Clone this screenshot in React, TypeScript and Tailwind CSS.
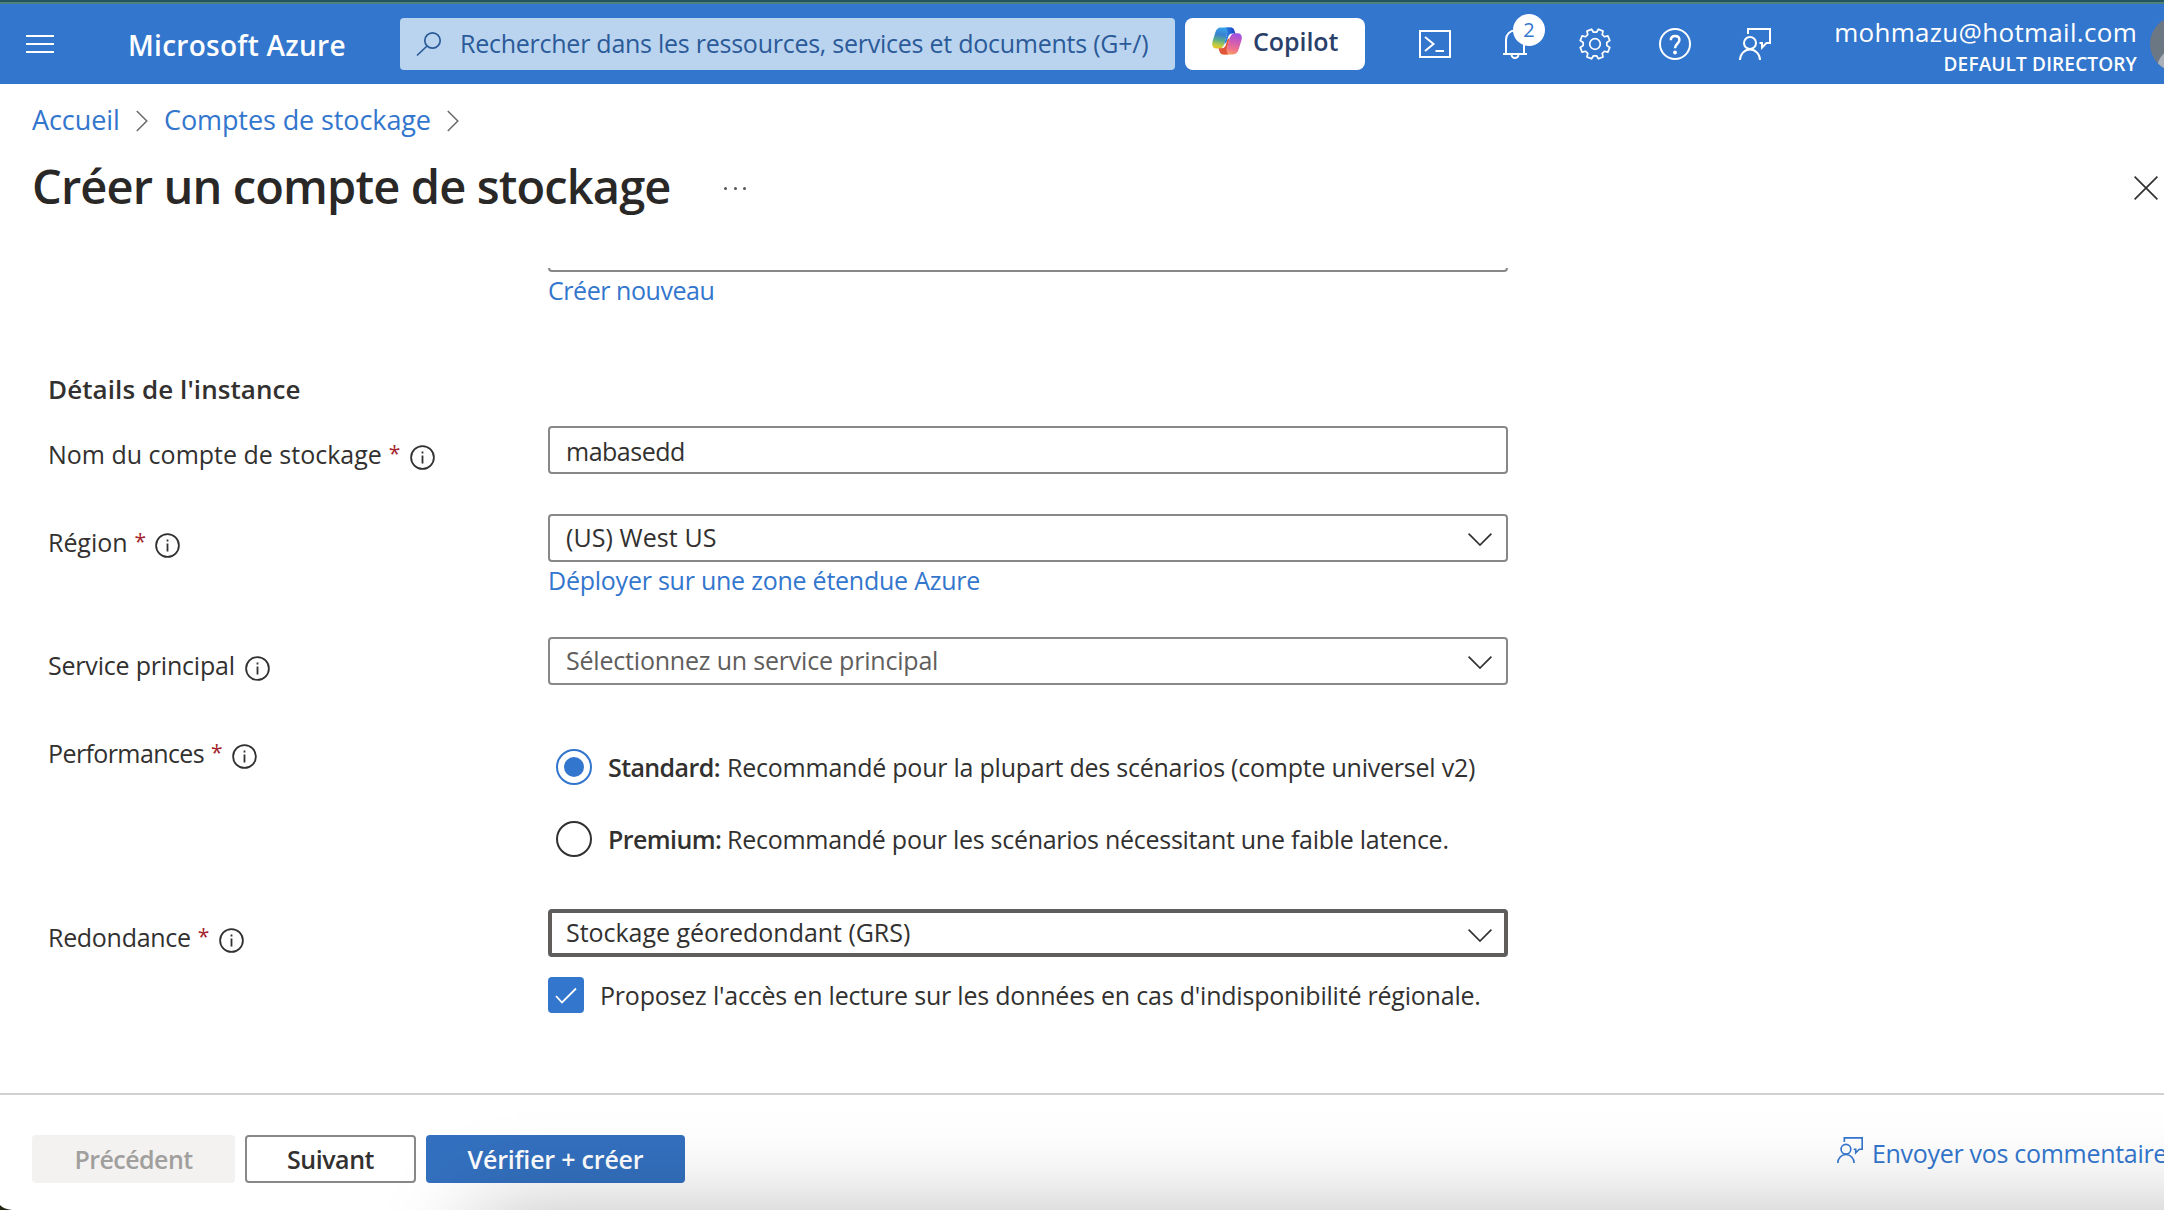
import type { ReactNode } from "react";

/* ---------- icons ---------- */

function SearchIcon() {
  return (
    <svg width="26" height="26" viewBox="0 0 26 26" fill="none" stroke="#2a5a98" strokeWidth="1.7">
      <circle cx="16.5" cy="9.5" r="7.7" />
      <path d="M11 15 1 24.5" />
    </svg>
  );
}

function CopilotLogo() {
  const ribbon =
    "M9 .4H20C17 1 16 3.6 15 7l-3 10.4C11 20.6 9.4 21.6 6.4 21.6H4.6C.6 21.6-.4 18.4.5 14.6L3.4 5.2C4.3 2 6 .4 9 .4Z";
  const fold = "M13.5 .4H18.6C21.6 .4 22.4 2.4 23.4 6.6H20.4C17.8 6.6 16.8 8 16.2 10L14.6 15 12 17.4 15 7C16 3.4 15 1.4 13.5 .4Z";
  return (
    <svg width="30" height="28" viewBox="0 0 30 28">
      <defs>
        <linearGradient id="cool" x1="10" y1="0" x2="6" y2="22" gradientUnits="userSpaceOnUse">
          <stop offset="0" stopColor="#35a6ee" />
          <stop offset=".35" stopColor="#3a80cf" />
          <stop offset=".6" stopColor="#5aae8a" />
          <stop offset=".85" stopColor="#c8cc3c" />
          <stop offset="1" stopColor="#f0c020" />
        </linearGradient>
        <linearGradient id="warm" x1="24" y1="6" x2="19" y2="28" gradientUnits="userSpaceOnUse">
          <stop offset="0" stopColor="#9a4fe6" />
          <stop offset=".4" stopColor="#cf5bb4" />
          <stop offset=".75" stopColor="#f0748a" />
          <stop offset="1" stopColor="#f7a25e" />
        </linearGradient>
        <linearGradient id="foldBlue" x1="14" y1="4" x2="23" y2="3" gradientUnits="userSpaceOnUse">
          <stop offset="0" stopColor="#2a7fe0" />
          <stop offset="1" stopColor="#1a3fc4" />
        </linearGradient>
      </defs>
      <path d={ribbon} fill="url(#cool)" />
      <path d="M21 27.4H10c3-.6 4-3.2 5-6.6l3-10.4c1-3.2 2.6-4.2 5.6-4.2h1.8c4 0 5 3.2 4.1 7L26.6 22.6c-.9 3.2-2.6 4.8-5.600 4.800Z" fill="url(#warm)" />
      <path d={fold} fill="url(#foldBlue)" />
      <path d={fold} fill="#e0563a" transform="rotate(180 15 13.9)" />
    </svg>
  );
}

function TerminalIcon() {
  return (
    <svg width="32" height="28" viewBox="0 0 32 28" fill="none" stroke="#fff" strokeWidth="2">
      <path d="M1 1h30v26H1z" />
      <path d="m6 7 8.500 7L6 21M16.500 21H25" />
    </svg>
  );
}

function BellIcon() {
  return (
    <svg width="24" height="30" viewBox="0 0 24 30" fill="none" stroke="#fff" strokeWidth="2">
      <path d="M3 25V10.500a9 9 0 0 1 18 0V25M0 25h24" />
      <path d="M8.500 25.500a3.500 3.500 0 0 0 7 0" />
    </svg>
  );
}

/* Eight teeth, four points each: two on the valley circle and two on the rim. */
const gearPoints = Array.from({ length: 8 }, (_, i) => {
  const mid = 22.5 + i * 45;
  return [
    [mid - 15, 11.9],
    [mid - 9.5, 15.2],
    [mid + 9.5, 15.2],
    [mid + 15, 11.9],
  ]
    .map(([deg, r]) => {
      const a = (deg * Math.PI) / 180;
      return `${(16 + r * Math.sin(a)).toFixed(2)},${(16 - r * Math.cos(a)).toFixed(2)}`;
    })
    .join(" ");
}).join(" ");

function GearIcon() {
  return (
    <svg width="32" height="32" viewBox="0 0 32 32" fill="none" stroke="#fff" strokeWidth="1.7" strokeLinejoin="round">
      <polygon points={gearPoints} />
      <circle cx="16" cy="16" r="5.3" />
    </svg>
  );
}

function HelpIcon() {
  return (
    <svg width="32" height="32" viewBox="0 0 32 32" fill="none" stroke="#fff" strokeWidth="2">
      <circle cx="16" cy="16" r="15" />
      <path strokeWidth="2.5" d="M11.800 12.300c0-2.700 1.800-4.300 4.300-4.300s4.300 1.500 4.300 4c0 3.700-4.400 3.900-4.400 8.300" />
      <circle cx="16" cy="24.5" r="1.9" fill="#fff" stroke="none" />
    </svg>
  );
}

function FeedbackIcon({ size }: { size: number }) {
  return (
    <svg width={size} height={size} viewBox="0 0 32 32" fill="none" stroke="currentColor" strokeWidth="2">
      <path d="M9 6V1h22v14h-3.500L23 19.500V15h-2.500" />
      <circle cx="11" cy="15" r="6" />
      <path d="M1 32a10 10.500 0 0 1 20 0" />
    </svg>
  );
}

function CrumbChevron() {
  return (
    <svg width="12" height="22" viewBox="0 0 12 22" fill="none" stroke="#6a6a6a" strokeWidth="1.5">
      <path d="m.8 1 10 10-10 10" />
    </svg>
  );
}

function InfoIcon() {
  return (
    <svg width="25" height="25" viewBox="0 0 25 25" fill="none" stroke="#323130" strokeWidth="1.8">
      <circle cx="12.5" cy="12.5" r="11.4" />
      <path d="M12.500 10.500v8M12.500 6.500v2" />
    </svg>
  );
}

function DropChevron() {
  return (
    <svg width="24" height="13" viewBox="0 0 24 13" fill="none" stroke="#323130" strokeWidth="1.7">
      <path d="m.6.700 11.400 11.300L23.400.700" />
    </svg>
  );
}

/* ---------- form pieces ---------- */

function Row({
  label,
  tracking,
  required,
  className,
  children,
}: {
  label: string;
  tracking: string;
  required?: boolean;
  className: string;
  children: ReactNode;
}) {
  return (
    <div className={`flex items-start ${className}`}>
      <div className="flex w-[500px] shrink-0 items-start pt-[11px] leading-[34px]">
        <span className={tracking}>{label}</span>
        {required && <span className="ml-[7px] w-[11px] text-[21px] leading-[32px] text-[#a4262c]">*</span>}
        <span className="mt-2 ml-[10px]">
          <InfoIcon />
        </span>
      </div>
      <div className="w-[960px]">{children}</div>
    </div>
  );
}

function Select({ children, focused, muted }: { children: ReactNode; focused?: boolean; muted?: boolean }) {
  return (
    <div
      className={`flex h-12 items-start justify-between rounded-[4px] leading-[34px] ${
        focused ? "border-4 border-[#605e5c] pt-[2px] pr-3 pl-[14px]" : "border-2 border-[#8a8886] pt-1 pr-[14px] pl-4"
      } ${muted ? "text-[#605e5c]" : ""}`}
    >
      {children}
      <span className={`flex h-[13px] ${focused ? "mt-[14px]" : "mt-[13px]"}`}>
        <DropChevron />
      </span>
    </div>
  );
}

function Radio({
  checked,
  title,
  children,
}: {
  checked?: boolean;
  title: string;
  children: ReactNode;
}) {
  return (
    <div className="flex h-9 items-center leading-[34px] whitespace-nowrap">
      <span
        className={`mr-4 flex size-9 shrink-0 items-center justify-center rounded-full border-2 ${
          checked ? "border-[#3376cd]" : "border-[#323130]"
        }`}
      >
        {checked && <span className="size-5 rounded-full bg-[#3376cd]" />}
      </span>
      <span className="w-[119px] shrink-0 font-semibold tracking-[-0.6px]">{title}</span>
      {children}
    </div>
  );
}

/* ---------- page ---------- */

export default function App() {
  return (
    <div className="relative flex h-[1210px] w-[2164px] flex-col overflow-hidden bg-white font-['Open_Sans','Noto_Sans',sans-serif] text-[25px] text-[#323130]">
      <div className="h-1 shrink-0 border-b-2 border-[#4f807c] bg-[#23565c]" />

      <header className="flex h-20 shrink-0 items-center bg-[#3376cd] text-white">
        <div className="ml-[26px] flex w-7 shrink-0 flex-col gap-[6px]">
          <span className="h-[2px] bg-white" />
          <span className="h-[2px] bg-white" />
          <span className="h-[2px] bg-white" />
        </div>
        <div className="ml-[74px] w-[272px] shrink-0 pt-[2px] text-[28px] leading-[38px] font-semibold tracking-[0.27px] whitespace-nowrap">
          Microsoft Azure
        </div>
        <div className="flex h-[52px] w-[775px] shrink-0 items-center rounded-[4px] bg-[#bad4ef] pl-4 text-[#2a5a98]">
          <SearchIcon />
          <span className="ml-[18px] pb-[2px] leading-[34px] tracking-[-0.25px] whitespace-nowrap">
            Rechercher dans les ressources, services et documents (G+/)
          </span>
        </div>
        <div className="ml-[10px] flex h-[52px] w-[180px] shrink-0 items-center rounded-[8px] bg-white pb-[6px] pl-[27px] text-[#2b3f6b]">
          <CopilotLogo />
          <span className="ml-[11px] leading-[34px] font-semibold tracking-[-0.05px]">Copilot</span>
        </div>
        <nav className="ml-[30px] grid shrink-0 grid-cols-[repeat(5,80px)] items-center justify-items-center">
          <TerminalIcon />
          <div className="relative">
            <BellIcon />
            <span className="absolute -top-[15px] left-[10px] flex size-8 items-center justify-center rounded-full bg-white text-[20px] leading-none text-[#3376cd]">
              2
            </span>
          </div>
          <GearIcon />
          <HelpIcon />
          <FeedbackIcon size={32} />
        </nav>
        <div className="flex w-[342px] shrink-0 flex-col items-end pt-[3px] whitespace-nowrap">
          <span className="text-[26px] leading-[36px] tracking-[0.3px]">mohmazu@hotmail.com</span>
          <span className="text-[19px] leading-[28px] font-semibold tracking-[0.15px]">DEFAULT DIRECTORY</span>
        </div>
        <div className="ml-[13px] flex size-14 shrink-0 items-end justify-center overflow-hidden rounded-full bg-[#6c7784]">
          <span className="h-6 w-[42px] rounded-t-full bg-[#a9b0b8]" />
        </div>
      </header>

      <div className="flex shrink-0 items-center pt-[17px] pl-8 text-[27px] leading-[40px] text-[#3376cd]">
        <span className="w-[104px] pb-[2px] leading-[38px] tracking-[-0.08px]">Accueil</span>
        <CrumbChevron />
        <span className="ml-4 w-[283px] pb-[2px] leading-[38px] tracking-[-0.1px]">Comptes de stockage</span>
        <CrumbChevron />
      </div>

      <div className="flex h-[79px] shrink-0 items-center pt-[15px] pl-8">
        <h1 className="w-[692px] pb-1 text-[47px] leading-[60px] font-semibold tracking-[-0.87px] whitespace-nowrap text-[#292827]">
          Créer un compte de stockage
        </h1>
        <div className="flex w-[22px] justify-between">
          <span className="size-[3px] rounded-full bg-[#555]" />
          <span className="size-[3px] rounded-full bg-[#555]" />
          <span className="size-[3px] rounded-full bg-[#555]" />
        </div>
        <svg className="ml-[1388px] shrink-0" width="24" height="24" viewBox="0 0 24 24" stroke="#323130" strokeWidth="1.7">
          <path d="m.6.600 22.800 22.800M23.400.600.600 23.400" />
        </svg>
      </div>

      <main className="flex min-h-0 flex-1 flex-col pt-12 pl-12">
        <div className="ml-[500px] w-[960px]">
          <div className="flex h-1 items-end overflow-hidden">
            <div className="h-12 w-full shrink-0 rounded-[4px] border-2 border-[#8a8886]" />
          </div>
          <div className="mt-px leading-[34px] tracking-[-0.45px] text-[#3376cd]">Créer nouveau</div>
        </div>

        <h2 className="mt-16 text-[26px] leading-[36px] font-semibold tracking-[0.08px]">Détails de l'instance</h2>

        <Row label="Nom du compte de stockage" tracking="tracking-[0px]" required className="mt-[19px]">
          <div className="h-12 rounded-[4px] border-2 border-[#8a8886] pt-[6px] pl-4 leading-[34px] tracking-[-0.5px]">
            mabasedd
          </div>
        </Row>

        <Row label="Région" tracking="tracking-[-0.05px]" required className="mt-10">
          <Select>
            <span className="tracking-[0.08px]">(US) West US</span>
          </Select>
          <div className="mt-px leading-[34px] tracking-[-0.24px] text-[#3376cd]">Déployer sur une zone étendue Azure</div>
        </Row>

        <Row label="Service principal" tracking="tracking-[-0.2px]" className="mt-10">
          <Select muted>
            <span className="tracking-[-0.2px]">Sélectionnez un service principal</span>
          </Select>
        </Row>

        <Row label="Performances" tracking="tracking-[-0.6px]" required className="mt-10">
          <div className="flex flex-col gap-9 pt-6 pl-2">
            <Radio checked title="Standard:">
              <span className="tracking-[-0.23px]">Recommandé pour la plupart des scénarios (compte universel v2)</span>
            </Radio>
            <Radio title="Premium:">
              <span className="tracking-[-0.27px]">Recommandé pour les scénarios nécessitant une faible latence.</span>
            </Radio>
          </div>
        </Row>

        <Row label="Redondance" tracking="tracking-[-0.3px]" required className="mt-[52px]">
          <Select focused>
            <span className="tracking-[-0.04px]">Stockage géoredondant (GRS)</span>
          </Select>
          <div className="mt-5 flex h-9 items-center leading-[34px] whitespace-nowrap">
            <span className="mr-4 flex size-9 shrink-0 items-center justify-center rounded-[4px] bg-[#3376cd]">
              <svg width="22" height="17" viewBox="0 0 22 17" fill="none" stroke="#fff" strokeWidth="1.8">
                <path d="m1 9 6 6.500L21 1.500" />
              </svg>
            </span>
            <span className="tracking-[-0.21px]">
              Proposez l'accès en lecture sur les données en cas d'indisponibilité régionale.
            </span>
          </div>
        </Row>
      </main>

      <footer className="flex h-[117px] shrink-0 items-start border-t-2 border-[#d1d1d1] pt-10 pl-8 leading-[34px] font-semibold whitespace-nowrap">
        <button className="h-12 w-[203px] shrink-0 rounded-[4px] bg-[#f3f2f1] tracking-[-0.55px] text-[#a19f9d]">Précédent</button>
        <button className="ml-[10px] h-12 w-[171px] shrink-0 rounded-[4px] border-2 border-[#8a8886] tracking-[-0.45px]">Suivant</button>
        <button className="ml-[10px] h-12 w-[259px] shrink-0 rounded-[4px] bg-[#3370bf] tracking-[-0.2px] text-white">
          Vérifier + créer
        </button>
        <div className="mt-[1px] ml-[1152px] flex shrink-0 items-start text-[#3376cd]">
          <span className="mt-px">
            <FeedbackIcon size={26} />
          </span>
          <span className="ml-[9px] font-normal tracking-[-0.3px]">Envoyer vos commentaires</span>
        </div>
      </footer>

      {/* Soft shadow rising from below the bottom edge, and the rounded window corner. */}
      <div className="pointer-events-none absolute top-full -right-[300px] left-[475px] h-[300px] shadow-[0_0_85px_rgba(0,0,0,0.25)]" />
      <svg className="absolute bottom-0 left-0" width="12" height="5" viewBox="0 0 12 5">
        <path d="M0 0C2 2.500 6 4.500 12 5H0Z" fill="#23240f" />
      </svg>
    </div>
  );
}
